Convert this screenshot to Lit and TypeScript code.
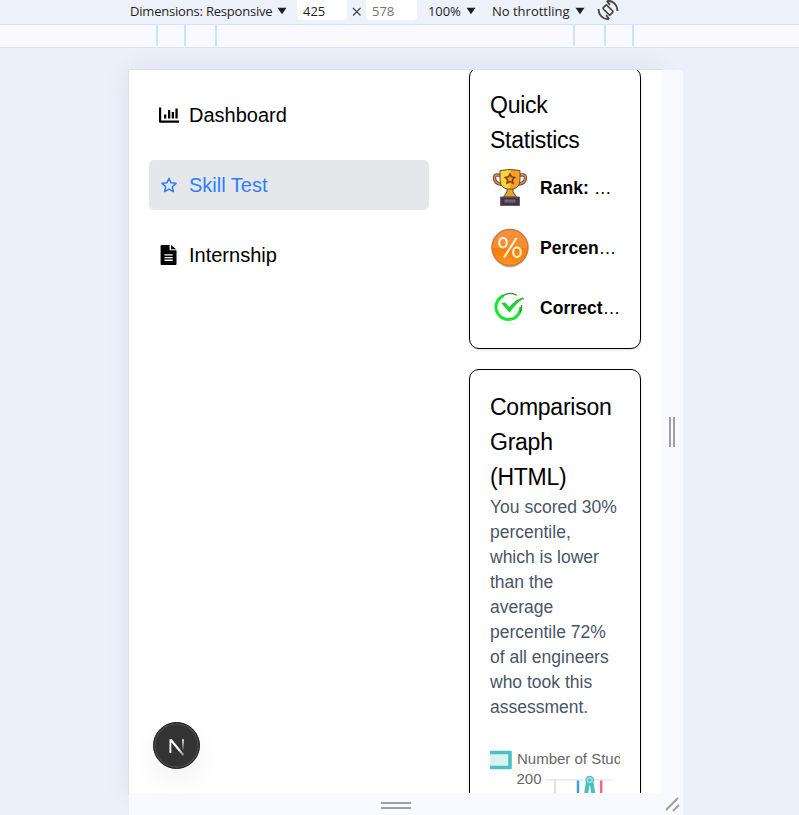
import { LitElement, html, css } from "lit";
import { customElement } from "lit/decorators.js";

const arrow = html`<svg class="arrow" width="10" height="8" viewBox="0 0 10 8"><path d="M.5.8h9L5 7.200z" fill="#1f1f1f"/></svg>`;

@customElement("dev-toolbar")
class DevToolbar extends LitElement {
  static styles = css`
    :host { display: block; flex: none; }
    .bar { display: flex; height: 24px; box-sizing: border-box; padding-left: 130px; background: #ecf1fa;
      color: #1f1f1f; font: 13px/22px "Open Sans", "Noto Sans", sans-serif; overflow: hidden; white-space: nowrap; }
    .dim { width: 147px; letter-spacing: -0.2px; }
    .pct { width: 38px; letter-spacing: -0.1px; }
    .thr { width: 83px; letter-spacing: 0; }
    .arrow { margin-top: 7px; flex: none; }
    .field { height: 20px; width: 50px; box-sizing: border-box; padding-left: 6px; background: #fff; border-radius: 0 0 4px 4px; }
    .first { margin-left: 10px; }
    .muted { color: #757575; width: 51px; }
    .times { width: 19px; height: 22px; }
    .zoom { margin-left: 11px; display: flex; }
    .throttle { margin-left: 16px; display: flex; }
    .rotate { margin-left: 11px; margin-top: -2px; }
    .ruler { display: block; height: 22px; background: #f8faff; border-top: 1px solid #d3e3fd; border-bottom: 1px solid #d3e3fd; }
    .ruler svg { display: block; }
  `;
  render() {
    return html`
      <div class="bar">
        <span class="dim">Dimensions: Responsive</span>${arrow}
        <span class="field first">425</span>
        <svg class="times" viewBox="0 0 19 22"><path d="m6 8 7.500 7.500m0-7.500L6 15.500" stroke="#474747" stroke-width="1.200" fill="none"/></svg>
        <span class="field muted">578</span>
        <span class="zoom"><span class="pct">100%</span>${arrow}</span>
        <span class="throttle"><span class="thr">No throttling</span>${arrow}</span>
        <svg class="rotate" width="24" height="24" viewBox="0 0 24 24" fill="none" stroke="#474747" stroke-width="1.900">
          <rect x="9.400" y="7" width="5.200" height="10" rx="1" transform="rotate(-45 12 12)" stroke-width="1.700"/>
          <path d="M2.600 11A9.500 9.500 0 0 0 12.800 21.200M10 17.200l3.300 3.800M21.400 13A9.500 9.500 0 0 0 11.200 2.800M14 6.800 10.700 3"/>
        </svg>
      </div>
      <div class="ruler"><svg width="799" height="21">
        <path fill="#d0e1fc" d="M156 0h2v21h-2zM184 0h2v21h-2zM215 0h2v21h-2zM573 0h2v21h-2zM604 0h2v21h-2zM632 0h2v21h-2z"/>
      </svg></div>`;
  }
}

@customElement("side-nav")
class SideNav extends LitElement {
  static styles = css`
    :host { display: flex; flex-direction: column; gap: 20px; width: 280px; padding: 20px; flex: none; }
    .item { display: flex; align-items: center; gap: 10px; height: 50px; padding: 0 10px; box-sizing: border-box; border-radius: 5px;
      font: 20px/30px "Liberation Sans", Arial, sans-serif; color: #000; }
    .on { background: #e5e7eb; color: #2b7fff; }
    svg { flex: none; }
  `;
  render() {
    return html`
      <div class="item"><svg width="20" height="20" viewBox="0 0 20 20"><path fill="currentColor" d="M0 2.500h2.200v13H20v2.200H1q-1 0-1-1zM5 9.500h2.300V13.500H5zM9 5h2.300v8.500H9zM12.700 7H15v6.500h-2.300zM16.400 3.500h2.300v10h-2.300z"/></svg><span>Dashboard</span></div>
      <div class="item on"><svg width="20" height="20" viewBox="0 0 20 20"><path fill="none" stroke="currentColor" stroke-width="1.500" stroke-linejoin="round" d="m10 3.200 2.050 4.650 5 .5-3.750 3.350 1.080 4.950L10 14.100l-4.380 2.550 1.080-4.950-3.750-3.350 5-.5z"/></svg><span>Skill Test</span></div>
      <div class="item"><svg width="20" height="20" viewBox="0 0 20 20"><path fill="currentColor" fill-rule="evenodd" d="M2.400 0h8.200v5.300h6.900V19q0 1-1 1H2.600q-1 0-1-1V1q0-1 1-1zM5.500 9.200v1.300h8.200V9.200zm0 2.700v1.300h8.200v-1.300zm0 2.700v1.300h8.200v-1.300zM12 0l5.200 4.200H12z"/></svg><span>Internship</span></div>`;
  }
}

@customElement("stat-panels")
class StatPanels extends LitElement {
  static styles = css`
    :host { display: flex; flex-direction: column; gap: 20px; width: 172px; margin: -3px 0 0 20px; flex: none; font-family: "Liberation Sans", Arial, sans-serif; }
    .card { box-sizing: border-box; border: 1px solid #000; border-radius: 10px; padding: 20px; background: #fff; box-shadow: 0 1px 3px rgba(0,0,0,.12); flex: none; }
    .tall { height: 480px; }
    h2 { margin: 0; font-weight: 400; font-size: 23px; letter-spacing: -0.25px; line-height: 35px; color: #000; }
    .rows { display: flex; flex-direction: column; gap: 20px; margin-top: 10px; }
    .row { display: flex; align-items: center; gap: 10px; height: 40px; }
    .row svg { flex: none; }
    .label { font-size: 17.500px; line-height: 25px; letter-spacing: .07px; min-width: 0; flex: 1; overflow: hidden; white-space: nowrap; }
    p { margin: 0; font-size: 17.500px; line-height: 25px; color: #4a5565; white-space: nowrap; }
    .chart { display: block; margin-top: 20px; font: 15px "Liberation Sans", Arial, sans-serif; }
  `;
  render() {
    return html`
      <section class="card">
        <h2>Quick<br>Statistics</h2>
        <div class="rows">
          <div class="row">
            <svg width="40" height="40" viewBox="0 0 40 40">
              <defs><linearGradient id="gold"><stop offset=".45" stop-color="#fed23a"/><stop offset=".55" stop-color="#fb9f24"/></linearGradient></defs>
              <g fill="none" stroke="#7a4d3d" stroke-width="3.400"><path d="M11 7H6.500q-2 0-2 3 0 5.500 7.500 6.500M28 7h4.500q3 0 3 3 0 5.500-8.500 6.500"/></g>
              <g fill="none" stroke="#d48a58" stroke-width="1.400"><path d="M11 7H6.500q-2 0-2 3 0 5.500 7.500 6.500M28 7h4.500q3 0 3 3 0 5.500-8.500 6.500"/></g>
              <path d="M17 20h6v4l3.500 5h-13l3.500-5z" fill="#e6a526" stroke="#6c4b32"/>
              <path d="M10 2.500q10-2 20 0v9q0 8-7 9.500h-6q-7-1.500-7-9.500z" fill="url(#gold)" stroke="#6c4b32"/>
              <path d="m20 6.200 1.500 2.700 3.100.6-2.200 2.300.5 3.200-2.900-1.400-2.900 1.400.5-3.200-2.200-2.300 3.100-.6z" fill="#f8a028" stroke="#7c4318" stroke-width="1.600"/>
              <path d="M10.500 29h19v8.500h-19z" fill="#443446" stroke="#6e5862"/><path d="M14.500 31.500h11v3h-11z" fill="#77676e"/>
            </svg><div class="label"><b>Rank:</b> …</div></div>
          <div class="row">
            <svg width="40" height="40" viewBox="0 0 40 40">
              <defs><linearGradient id="orange" x2="0" y2="1"><stop stop-color="#f4924a"/><stop offset=".5" stop-color="#f78a2a"/><stop offset=".52" stop-color="#f77b0b"/><stop offset="1" stop-color="#ff9418"/></linearGradient></defs>
              <ellipse cx="20" cy="22" rx="17" ry="17.500" fill="#b9b6b4"/>
              <circle cx="20" cy="19.500" r="18" fill="url(#orange)" stroke="#cb7b38" stroke-width="1.500"/>
              <g fill="none" stroke="#fff0d2" stroke-width="2.200"><ellipse cx="13" cy="14.700" rx="3.800" ry="4.800"/><ellipse cx="27" cy="24.200" rx="3.800" ry="4.800"/><path d="M26.500 10 14 29.500"/></g>
            </svg><div class="label"><b>Percen</b>…</div></div>
          <div class="row">
            <svg width="40" height="40" viewBox="0 0 40 40">
              <ellipse cx="19" cy="36" rx="9" ry="1.500" fill="#f2fff3"/>
              <path d="M13.500 7.700A12.400 12.400 0 1 0 30.800 19" fill="none" stroke="#18e62c" stroke-width="3"/>
              <path d="M12.500 8Q20 3 27 7.300M31.500 17q.4 4-1.500 7.500" fill="none" stroke="#378d38" stroke-width="1.300"/>
              <path d="m11 14.800 4.200-.3 4 4.500Q25 12 33 9.500l.5.700Q25 16.500 19.500 24.800z" fill="#20d42d"/><path d="m25 13.500 8-3.800.2 2.500" fill="none" stroke="#52874f" stroke-width=".8"/>
            </svg><div class="label"><b>Correct</b>…</div></div>
        </div>
      </section>
      <section class="card tall">
        <h2>Comparison<br>Graph<br>(HTML)</h2>
        <p>You scored 30%<br>percentile,<br>which is lower<br>than the<br>average<br>percentile 72%<br>of all engineers<br>who took this<br>assessment.</p>
        <svg class="chart" width="130" height="60" viewBox="0 0 130 60">
          <path d="M0 12.500h20v15H0" fill="#dbf2f2" stroke="#4bc0c0" stroke-width="3.500"/>
          <text x="27" y="24" fill="#666">Number of Students</text>
          <text x="51.500" y="44" text-anchor="end" fill="#666">200</text>
          <path d="M55 39.800h68" stroke="#e5e5e5" stroke-width="1.300"/><path d="M65 40v20" stroke="#d9d9d9" stroke-width="1.500"/>
          <path d="M88 40.500v20" stroke="#36a2eb" stroke-width="2.500"/><path d="M111.200 40.500v20" stroke="#ff6384" stroke-width="2.500"/>
          <path d="M95.500 60Q97.500 40 99.700 40T104 60" fill="none" stroke="#4bc0c0" stroke-width="4"/>
          <circle cx="99.700" cy="40" r="3.700" fill="#a5dfdf" stroke="#4bc0c0" stroke-width="1.300"/><circle cx="99.700" cy="40" r="1.500" fill="#4bc0c0"/>
        </svg>
      </section>`;
  }
}

@customElement("app-root")
class AppRoot extends LitElement {
  static styles = css`
    :host { display: flex; flex-direction: column; width: 799px; height: 815px; overflow: hidden; background: #ebf0fa; }
    .stage { flex: 1; min-height: 0; display: grid; grid-template-columns: 532px 22px; grid-template-rows: 723px 22px; padding: 22px 0 0 129px; background: #ebf0fa; }
    .shade { box-shadow: 0 0 0 1px #dce0e6, 0 0 24px rgba(60,80,110,.09); grid-area: 1 / 1; }
    .device { grid-area: 1 / 1; position: relative; display: flex; align-items: flex-start; overflow: hidden; background: #fff; }
    .side, .bottom { position: relative; display: flex; align-items: center; justify-content: center; background: #f8faff; }
    .bottom { padding: 3px 0 0 1px; box-sizing: border-box; }
    .badge { position: absolute; left: 24px; bottom: 24px; width: 47px; height: 47px; box-sizing: border-box; border-radius: 50%; background: #333; border: 1px solid #171717;
      box-shadow: inset 0 0 0 1.500px #4a4a4a, 0 12px 30px rgba(0,0,0,.06); display: flex; align-items: center; justify-content: center; }
  `;
  render() {
    return html`
      <dev-toolbar></dev-toolbar>
      <div class="stage">
        <div class="shade"></div>
        <main class="device">
          <side-nav></side-nav>
          <stat-panels></stat-panels>
          <div class="badge"><svg width="20" height="20" viewBox="0 0 20 20" fill="none">
            <defs><linearGradient id="leg" x2="0" y2="1"><stop stop-color="#ddd"/><stop offset="1" stop-color="#3a3a3a"/></linearGradient>
            <linearGradient id="diag" x1=".6" y1=".6" x2="1" y2="1"><stop stop-color="#fff"/><stop offset="1" stop-color="#666"/></linearGradient></defs>
            <path d="M2.500 3.200h2.300L17.300 18.500 15.800 20 4.300 6.200V17H2.500z" fill="url(#diag)"/><path d="M15 3.200h2V14.500h-2z" fill="url(#leg)"/>
          </svg></div>
        </main>
        <div class="side"><svg width="8" height="30"><path d="M1 0h2v30H1zM5 0h2v30H5z" fill="#a0a0a0"/></svg></div>
        <div class="bottom"><svg width="30" height="8"><path d="M0 0h30v2H0zM0 5h30v2H0z" fill="#a0a0a0"/></svg></div>
        <div class="side"><svg width="16" height="16"><path d="M2 14 14 2M9 15l6-6" stroke="#a0a0a0" stroke-width="2"/></svg></div>
      </div>`;
  }
}
